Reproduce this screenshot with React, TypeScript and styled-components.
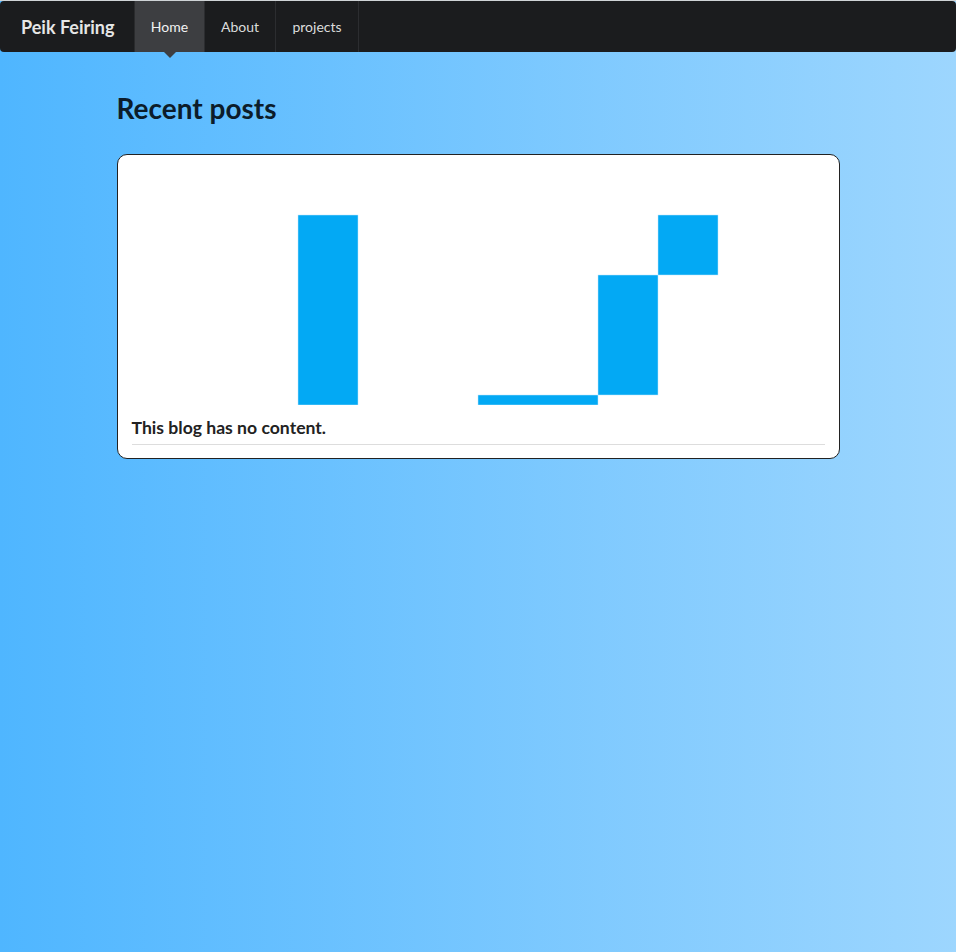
import React from "react";
import styled, { createGlobalStyle } from "styled-components";

const Global = createGlobalStyle`
  html, body { margin: 0; padding: 0; }
  body {
    min-height: 952px;
    font-family: Lato, "Open Sans", sans-serif;
    background: linear-gradient(to right, #4fb6ff 0%, #9dd6fe 100%);
    border-top: 1px solid #cfd3d6;
    box-sizing: border-box;
  }
`;

const NavBar = styled.nav`
  height: 51px;
  background: #1b1c1e;
  border-radius: 4px;
  display: flex;
  align-items: stretch;
`;

const Brand = styled.a`
  display: flex;
  align-items: center;
  padding: 0 19px 0 21px;
  width: 94px;
  font-size: 18px;
  font-weight: 700;
  color: #e6e6e6;
  text-decoration: none;
  border-right: 1px solid #2a2b2d;
`;

const NavItem = styled.a<{ $active?: boolean; $w: number }>`
  position: relative;
  display: flex;
  align-items: center;
  justify-content: center;
  width: ${(p) => p.$w}px;
  font-size: 14px;
  color: ${(p) => (p.$active ? "#f2f2f2" : "#dcdcdc")};
  background: ${(p) => (p.$active ? "#3d3e41" : "transparent")};
  border-right: 1px solid #2c2d30;
  text-decoration: none;
  &::after {
    content: "";
    display: ${(p) => (p.$active ? "block" : "none")};
    position: absolute;
    left: 50%;
    bottom: -6px;
    transform: translateX(-50%);
    border-left: 6px solid transparent;
    border-right: 6px solid transparent;
    border-top: 6px solid #3d3e41;
  }
`;

const Main = styled.main`
  width: 723px;
  margin: 0 auto;
  padding-top: 38px;
`;

const Title = styled.h1`
  margin: 0 0 28px 0;
  font-size: 28px;
  font-weight: 700;
  line-height: 36px;
  color: #0c1c2a;
`;

const Card = styled.section`
  background: #fff;
  border: 1px solid #222;
  border-radius: 10px;
  padding: 0 14px 13px 14px;
`;

const Chart = styled.svg`
  display: block;
  width: 693px;
  height: 250px;
`;

const PostText = styled.h3`
  margin: 10px 0 0 0;
  font-size: 17.6px;
  font-weight: 700;
  line-height: 26px;
  color: #222;
  padding-bottom: 3px;
  border-bottom: 1px solid #dddddd;
`;

export default function App() {
  // svg origin: card content left x=132, top y=155
  const ox = 132;
  const oy = 155;
  const bars = [
    { x: 298, y: 215, w: 60, h: 190 },
    { x: 478, y: 395, w: 120, h: 10 },
    { x: 598, y: 275, w: 60, h: 120 },
    { x: 658, y: 215, w: 60, h: 60 },
  ];
  return (
    <>
      <Global />
      <NavBar>
        <Brand href="#">Peik Feiring</Brand>
        <NavItem href="#" $active $w={69}>Home</NavItem>
        <NavItem href="#" $w={70}>About</NavItem>
        <NavItem href="#" $w={82}>projects</NavItem>
      </NavBar>
      <Main>
        <Title>Recent posts</Title>
        <Card>
          <Chart viewBox="0 0 693 250">
            {bars.map((b, i) => (
              <rect
                key={i}
                x={b.x - ox}
                y={b.y - oy}
                width={b.w}
                height={b.h}
                fill="#03a9f4"
                stroke="#bfe6fb"
                strokeWidth={0.5}
              />
            ))}
          </Chart>
          <PostText>This blog has no content.</PostText>
        </Card>
      </Main>
    </>
  );
}
